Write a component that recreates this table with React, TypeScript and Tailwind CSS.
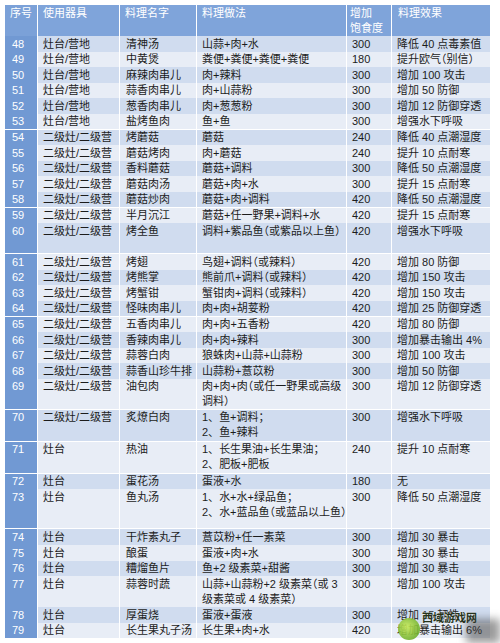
import React from "react";

type Row = {
  no: number;
  tool: string;
  name: string;
  recipe: string[];
  food: string;
  effect: string;
  h: string;
};

const S = "h-[14.6px]";
const D = "h-[30px]";

const rows: Row[] = [
  { no: 48, tool: "灶台/营地", name: "清神汤", recipe: ["山蒜+肉+水"], food: "300", effect: "降低 40 点毒素值", h: S },
  { no: 49, tool: "灶台/营地", name: "中黄煲", recipe: ["粪便+粪便+粪便+粪便"], food: "180", effect: "提升欧气（别信）", h: S },
  { no: 50, tool: "灶台/营地", name: "麻辣肉串儿", recipe: ["肉+辣料"], food: "300", effect: "增加 100 攻击", h: S },
  { no: 51, tool: "灶台/营地", name: "蒜香肉串儿", recipe: ["肉+山蒜粉"], food: "300", effect: "增加 50 防御", h: S },
  { no: 52, tool: "灶台/营地", name: "葱香肉串儿", recipe: ["肉+葱葱粉"], food: "300", effect: "增加 12 防御穿透", h: S },
  { no: 53, tool: "灶台/营地", name: "盐烤鱼肉", recipe: ["鱼+鱼"], food: "300", effect: "增强水下呼吸", h: S },
  { no: 54, tool: "二级灶/二级营", name: "烤蘑菇", recipe: ["蘑菇"], food: "240", effect: "降低 40 点潮湿度", h: S },
  { no: 55, tool: "二级灶/二级营", name: "蘑菇烤肉", recipe: ["肉+蘑菇"], food: "240", effect: "提升 10 点耐寒", h: S },
  { no: 56, tool: "二级灶/二级营", name: "香料蘑菇", recipe: ["蘑菇+调料"], food: "300", effect: "降低 50 点潮湿度", h: S },
  { no: 57, tool: "二级灶/二级营", name: "蘑菇肉汤", recipe: ["蘑菇+肉+水"], food: "300", effect: "提升 15 点耐寒", h: S },
  { no: 58, tool: "二级灶/二级营", name: "蘑菇炒肉", recipe: ["蘑菇+肉+调料"], food: "420", effect: "降低 50 点潮湿度", h: S },
  { no: 59, tool: "二级灶/二级营", name: "半月沉江", recipe: ["蘑菇+任一野果+调料+水"], food: "420", effect: "提升 15 点耐寒", h: S },
  { no: 60, tool: "二级灶/二级营", name: "烤全鱼", recipe: ["调料+紫品鱼（或紫品以上鱼）"], food: "420", effect: "增强水下呼吸", h: D },
  { no: 61, tool: "二级灶/二级营", name: "烤翅", recipe: ["鸟翅+调料（或辣料）"], food: "420", effect: "增加 80 防御", h: S },
  { no: 62, tool: "二级灶/二级营", name: "烤熊掌", recipe: ["熊前爪+调料（或辣料）"], food: "420", effect: "增加 150 攻击", h: S },
  { no: 63, tool: "二级灶/二级营", name: "烤蟹钳", recipe: ["蟹钳肉+调料（或辣料）"], food: "420", effect: "增加 150 攻击", h: S },
  { no: 64, tool: "二级灶/二级营", name: "怪味肉串儿", recipe: ["肉+肉+胡荽粉"], food: "420", effect: "增加 25 防御穿透", h: S },
  { no: 65, tool: "二级灶/二级营", name: "五香肉串儿", recipe: ["肉+肉+五香粉"], food: "420", effect: "增加 80 防御", h: S },
  { no: 66, tool: "二级灶/二级营", name: "香辣肉串儿", recipe: ["肉+肉+辣料"], food: "300", effect: "增加暴击输出 4%", h: S },
  { no: 67, tool: "二级灶/二级营", name: "蒜蓉白肉", recipe: ["狼蛛肉+山蒜+山蒜粉"], food: "300", effect: "增加 100 攻击", h: S },
  { no: 68, tool: "二级灶/二级营", name: "蒜香山珍牛排", recipe: ["山蒜粉+薏苡粉"], food: "300", effect: "增加 50 防御", h: S },
  { no: 69, tool: "二级灶/二级营", name: "油包肉", recipe: ["肉+肉+肉（或任一野果或高级", "调料）"], food: "300", effect: "增加 12 防御穿透", h: D },
  { no: 70, tool: "二级灶/二级营", name: "炙燎白肉", recipe: ["1、鱼+调料；", "2、鱼+辣料"], food: "300", effect: "增强水下呼吸", h: "h-[31px]" },
  { no: 71, tool: "灶台", name: "热油", recipe: ["1、长生果油+长生果油；", "2、肥板+肥板"], food: "240", effect: "提升 10 点耐寒", h: "h-[31px]" },
  { no: 72, tool: "灶台", name: "蛋花汤", recipe: ["蛋液+水"], food: "180", effect: "无", h: S },
  { no: 73, tool: "灶台", name: "鱼丸汤", recipe: ["1、水+水+绿品鱼；", "2、水+蓝品鱼（或蓝品以上鱼）"], food: "300", effect: "降低 50 点潮湿度", h: "h-[39px]" },
  { no: 74, tool: "灶台", name: "干炸素丸子", recipe: ["薏苡粉+任一素菜"], food: "300", effect: "增加 30 暴击", h: S },
  { no: 75, tool: "灶台", name: "酿蛋", recipe: ["蛋液+肉+水"], food: "300", effect: "增加 30 暴击", h: S },
  { no: 76, tool: "灶台", name: "糟熘鱼片", recipe: ["鱼+2 级素菜+甜酱"], food: "300", effect: "增加 30 暴击", h: S },
  { no: 77, tool: "灶台", name: "蒜蓉时蔬", recipe: ["山蒜+山蒜粉+2 级素菜（或 3", "级素菜或 4 级素菜）"], food: "300", effect: "增加 100 攻击", h: D },
  { no: 78, tool: "灶台", name: "厚蛋烧", recipe: ["蛋液+蛋液"], food: "300", effect: "增加 15 韧性", h: S },
  { no: 79, tool: "灶台", name: "长生果丸子汤", recipe: ["长生果+肉+水"], food: "420", effect: "增加暴击输出 6%", h: S },
];

const cols = "grid grid-cols-[32px_81px_76px_149px_44px_98px] gap-x-[1px]";

// "1、" keeps a full-width comma, brackets get half-width
function Line({ text }: { text: string }) {
  const m = text.match(/^(\d、)(.*)$/);
  if (!m) return <div>{text}</div>;
  return (
    <div>
      <span className="[font-feature-settings:normal]">{m[1]}</span>
      {m[2]}
    </div>
  );
}

export default function App() {
  return (
    <div
      className="relative w-[500px] h-[643px] overflow-hidden bg-white pl-[5px] pt-[5px] text-[11px] leading-[15px] text-[#1c1c1c]"
      style={{ fontFamily: '"Liberation Sans", "Noto Sans CJK SC", sans-serif' }}
    >
      <div className="flex w-[485px] flex-col gap-y-[1px]">
        <div className={`${cols} h-[30px] text-white`}>
          <div className="bg-[#7ba1d8] pl-[5px] pt-[1px]">序号</div>
          <div className="bg-[#7fa4da] pl-[5px] pt-[1px]">使用器具</div>
          <div className="bg-[#7fa4da] pl-[5px] pt-[1px]">料理名字</div>
          <div className="bg-[#7fa4da] pl-[5px] pt-[1px]">料理做法</div>
          <div className="bg-[#7fa4da] pl-[3px] pt-[1px]">
            增加
            <br />
            饱食度
          </div>
          <div className="bg-[#7fa4da] pl-[6px] pt-[1px]">料理效果</div>
        </div>
        {rows.map((r, i) => {
          const bg = i % 2 === 0 ? "bg-[#d0dcef]" : "bg-[#e8edf6]";
          return (
            <div key={r.no} className={`${cols} ${r.h}`}>
              <div className="bg-[#7199d3] pl-[7px] pt-[0.5px] text-white">{r.no}</div>
              <div className={`${bg} whitespace-nowrap pl-[5px] pt-[0.5px]`}>{r.tool}</div>
              <div className={`${bg} whitespace-nowrap pl-[6px] pt-[0.5px]`}>{r.name}</div>
              <div className={`${bg} whitespace-nowrap pl-[5px] pt-[0.5px] [font-feature-settings:'halt']`}>
                {r.recipe.map((l, k) => (
                  <Line key={k} text={l} />
                ))}
              </div>
              <div className={`${bg} pl-[5px] pt-[0.5px]`}>{r.food}</div>
              <div className={`${bg} whitespace-nowrap pl-[5px] pt-[0.5px] [font-feature-settings:'halt']`}>{r.effect}</div>
            </div>
          );
        })}
      </div>

      {/* watermark */}
      <div className="absolute left-[398px] top-[612px] flex items-start gap-[2px]">
        <div className="mt-[6px] h-[22px] w-[22px] rounded-full bg-[radial-gradient(circle_at_40%_40%,#c6ea57,#4f9a1c)] opacity-90" />
        <div className="flex flex-col">
          <div className="text-[11px] font-bold leading-[13px] text-[#26331a] [text-shadow:0_0_2px_#fff]">西域游戏网</div>
        </div>
      </div>
      <div className="absolute right-0 bottom-0 h-[24px] w-[34px] bg-[#3a3a3a]/50 blur-[4px]" />
    </div>
  );
}
